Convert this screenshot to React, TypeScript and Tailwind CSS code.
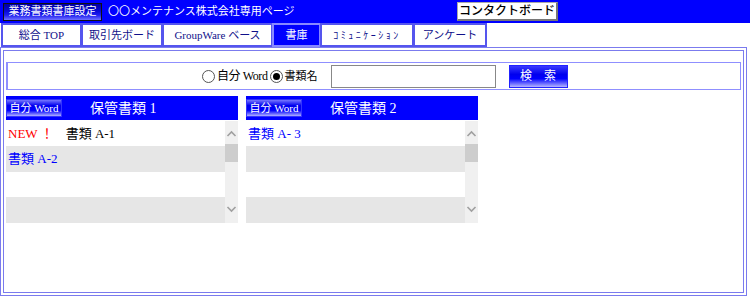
const serif = "font-[family-name:'Liberation_Serif','Noto_Sans_CJK_JP',serif]";
const sans = "font-[family-name:'Liberation_Sans','Noto_Sans_CJK_JP',sans-serif]";

const tabs = [
  { label: "総合 TOP", w: "w-[81px]" },
  { label: "取引先ボード", w: "w-[82px]" },
  { label: "GroupWare ベース", w: "w-[111px]" },
  { label: "書庫", w: "w-[49px]", active: true },
  { label: "ｺﾐｭﾆｹｰｼｮﾝ", w: "w-[94px]", small: true },
  { label: "アンケート", w: "w-[74px]" },
];

function Radio({ checked }: { checked?: boolean }) {
  return (
    <span className="shrink-0 w-[13px] h-[13px] rounded-full border border-[#555] bg-white flex items-center justify-center">
      {checked && <span className="w-[7px] h-[7px] rounded-full bg-black" />}
    </span>
  );
}

function ScrollBar() {
  return (
    <div className="w-[13px] h-full bg-[#f0f0f0] flex flex-col items-center">
      <svg width="11" height="8" viewBox="0 0 11 8" className="mt-[9px]">
        <path d="M1.5 6 L5.5 2 L9.5 6" stroke="#a0a0a0" strokeWidth="1.6" fill="none" />
      </svg>
      <div className="w-[13px] h-[18px] bg-[#cdcdcd] mt-[6px]" />
      <div className="flex-1" />
      <svg width="11" height="8" viewBox="0 0 11 8" className="mb-[10px]">
        <path d="M1.5 2 L5.5 6 L9.5 2" stroke="#a0a0a0" strokeWidth="1.6" fill="none" />
      </svg>
    </div>
  );
}

function Panel({ title, rows }: { title: string; rows: React.ReactNode[] }) {
  const heights = ["h-[25px]", "h-[26px]", "h-[25px]", "h-[26px]"];
  return (
    <div className="w-[232px] flex flex-col">
      <div className="h-[24px] bg-[#0000ff] flex items-center">
        <div className={`${serif} shrink-0 whitespace-nowrap w-[56px] h-[18px] flex items-center justify-center text-white text-[11px] border border-[#3333ff] bg-[linear-gradient(#7777ff,#0000ee_35%,#0000ff_65%,#b0b0ff)]`}>
          自分 Word
        </div>
        <span className={`${serif} whitespace-nowrap text-white text-[14px] ml-[28px]`}>{title}</span>
      </div>
      <div className="mt-[1px] flex h-[102px]">
        <div className="flex-1 flex flex-col">
          {heights.map((h, i) => (
            <div key={i} className={`${h} ${i % 2 ? "bg-[#e6e6e6]" : "bg-white"} flex items-center pl-[2px] whitespace-nowrap ${serif} text-[13px]`}>
              {rows[i]}
            </div>
          ))}
        </div>
        <ScrollBar />
      </div>
    </div>
  );
}

export default function App() {
  return (
    <div className={`w-[750px] h-[296px] bg-white overflow-hidden ${sans}`}>
      {/* top bar */}
      <div className="h-[23px] bg-[#0000ff] flex items-center whitespace-nowrap">
        <div className="shrink-0 ml-[3px] w-[99px] h-[18px] border border-[#111] bg-[linear-gradient(#0000a0,#0808d8_45%,#2020f0_70%,#7070ff)] flex items-center justify-center text-white text-[11px]">
          業務書類書庫設定
        </div>
        <span className="shrink-0 ml-[6px] text-white text-[11px] w-[349px]">〇〇メンテナンス株式会社専用ページ</span>
        <div className="shrink-0 w-[101px] h-[19px] bg-white border border-[#aaa] border-b-2 border-b-[#777] border-r-2 border-r-[#777] flex items-center justify-center text-black text-[12px] font-medium">
          コンタクトボード
        </div>
      </div>

      {/* tabs */}
      <div className="h-[24px] flex pl-[1px] whitespace-nowrap">
        {tabs.map((t) => (
          <div
            key={t.label}
            className={`${t.w} shrink-0 h-full border-2 border-[#5555ee] -ml-[1px] first:ml-0 flex items-center justify-center ${serif} ${
              t.active ? "bg-[#0000ff] text-white border-[#8888ff]" : "bg-white text-[#10108a]"
            } ${t.small ? "text-[10px] tracking-[2.5px]" : "text-[11px]"}`}
          >
            {t.label}
          </div>
        ))}
      </div>

      {/* main */}
      <div className="w-[747px] h-[249px] border border-[#7b7bee] p-[2px]">
        <div className="w-full h-full border border-[#7b7bee] px-[2px] pt-[11px]">
          <div className="h-[28px] border border-[#8f8fff] border-l-2 flex items-center pl-[194px] text-[11px] text-black whitespace-nowrap">
            <Radio />
            <span className={`${serif} ml-[2px] mr-[2px] text-[12px] tracking-[-0.4px]`}>自分 Word</span>
            <Radio checked />
            <span className="ml-[2px]">書類名</span>
            <div className="shrink-0 ml-[13px] w-[165px] h-[23px] border border-[#888] bg-white" />
            <div className="shrink-0 ml-[13px] w-[59px] h-[23px] border border-[#2222ff] bg-[linear-gradient(#3a3aff,#0000ee_40%,#0000ff_60%,#b5b5ff)] flex items-center justify-center text-white text-[12px]">
              検　索
            </div>
          </div>

          <div className="mt-[6px] flex gap-[8px]">
            <Panel
              title="保管書類 1"
              rows={[
                <>
                  <span className="text-[#ff0000]">NEW ！</span>
                  <span className="ml-[12px] text-black">書類 A-1</span>
                </>,
                <span className="text-[#0000ff]">書類 A-2</span>,
                null,
                null,
              ]}
            />
            <Panel title="保管書類 2" rows={[<span className="text-[#0000ff]">書類 A- 3</span>, null, null, null]} />
          </div>
        </div>
      </div>
    </div>
  );
}
